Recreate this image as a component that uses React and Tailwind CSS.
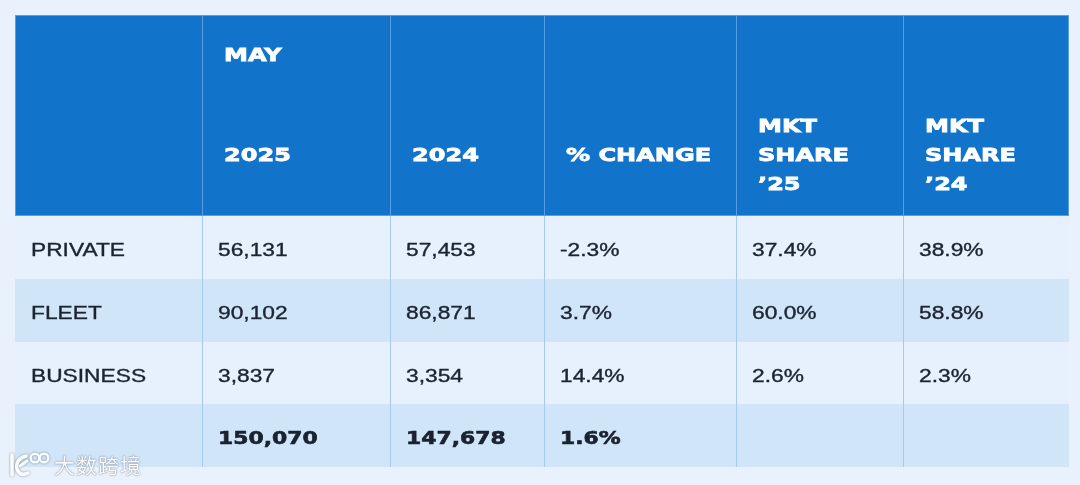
import React from "react";

const W = ["w-[187px]", "w-[188px]", "w-[154px]", "w-[192px]", "w-[167px]", "w-[166px]"];

const rows = [
  { cells: ["PRIVATE", "56,131", "57,453", "-2.3%", "37.4%", "38.9%"], dark: false },
  { cells: ["FLEET", "90,102", "86,871", "3.7%", "60.0%", "58.8%"], dark: true },
  { cells: ["BUSINESS", "3,837", "3,354", "14.4%", "2.6%", "2.3%"], dark: false },
];

function H({ lines }) {
  return (
    <span className="inline-block origin-left scale-x-[1.3] font-['DejaVu_Sans',sans-serif] font-bold text-[18.5px] leading-[29px] text-white whitespace-nowrap [-webkit-text-stroke:0.8px_white]">
      {lines.map((l, i) => (
        <span key={i} className="block">{l}</span>
      ))}
    </span>
  );
}

function B({ children }) {
  return (
    <span className="inline-block origin-left scale-x-[1.3] font-['Liberation_Sans',Arial,sans-serif] text-[17.5px] leading-[20px] text-[#1c2433] whitespace-nowrap [-webkit-text-stroke:0.35px_#1c2433]">
      {children}
    </span>
  );
}

function T({ children }) {
  return (
    <span className="inline-block origin-left scale-x-[1.25] font-['DejaVu_Sans',sans-serif] font-bold text-[17.5px] leading-[20px] text-[#1a2130] whitespace-nowrap [-webkit-text-stroke:0.6px_#1a2130]">
      {children}
    </span>
  );
}

export default function App() {
  const headers = [null, ["2025"], ["2024"], ["% CHANGE"], ["MKT", "SHARE", "\u201925"], ["MKT", "SHARE", "\u201924"]];
  return (
    <div className="relative w-[1080px] h-[485px] bg-[#e9f2fc] pt-[15px] pl-[15px]">
      <div className="w-[1054px]">
        {/* header */}
        <div className="flex h-[201px] bg-[#1173ca] border border-[#5b9de2]">
          {headers.map((h, i) => (
            <div
              key={i}
              className={`${W[i]} ${i > 0 ? "border-l border-[#5b9de2]" : ""} flex flex-col shrink-0 ${i === 0 ? "-ml-px" : ""}`}
            >
              <div className="h-[77px] flex items-center pl-[21px] pt-[1px]">
                {i === 1 && <H lines={["MAY"]} />}
              </div>
              <div className="h-[123px] flex items-center pl-[21px] pt-[1px]">
                {h && <H lines={h} />}
              </div>
            </div>
          ))}
        </div>
        {/* body rows */}
        {rows.map((r, ri) => (
          <div key={ri} className={`flex ${ri === 2 ? "h-[62px]" : "h-[63px]"} ${r.dark ? "bg-[#d1e5f8]" : "bg-[#e6f1fd]"}`}>
            {r.cells.map((c, ci) => (
              <div
                key={ci}
                className={`${W[ci]} shrink-0 flex items-center pt-[5px] ${ci > 0 ? "border-l border-[#a6c9ee] pl-[15px]" : "pl-[16px]"}`}
              >
                <B>{c}</B>
              </div>
            ))}
          </div>
        ))}
        {/* totals */}
        <div className="flex h-[63px] bg-[#d1e5f8]">
          {["", "150,070", "147,678", "1.6%", "", ""].map((c, ci) => (
            <div
              key={ci}
              className={`${W[ci]} shrink-0 flex items-center pl-[15px] pt-[4px] ${ci > 0 ? "border-l border-[#a6c9ee]" : ""}`}
            >
              {c && <T>{c}</T>}
            </div>
          ))}
        </div>
      </div>

      {/* watermark */}
      <div className="absolute left-[8px] top-[449px] flex items-center gap-[4px] opacity-90">
        <svg width="42" height="30" viewBox="0 0 42 30" className="drop-shadow-[0_0_1px_rgba(90,100,120,0.8)]">
          <path d="M4 6 L4 26" stroke="white" strokeWidth="3.5" strokeLinecap="round" fill="none" />
          <path d="M18 7 C9 9 7 17 10 22 C12 26 16 26 20 24" stroke="white" strokeWidth="3.5" strokeLinecap="round" fill="none" />
          <path d="M12 17 L19 12" stroke="white" strokeWidth="3" strokeLinecap="round" fill="none" />
          <circle cx="27" cy="9" r="4.3" stroke="white" strokeWidth="2.4" fill="none" />
          <circle cx="36" cy="9" r="4.3" stroke="white" strokeWidth="2.4" fill="none" />
        </svg>
        <span className="font-['Noto_Sans_CJK_SC',sans-serif] text-[21px] leading-[28px] text-white tracking-[1px] [text-shadow:0_0_1px_rgba(80,90,110,0.9),0_0_2px_rgba(80,90,110,0.5)]">
          大数跨境
        </span>
      </div>
    </div>
  );
}
